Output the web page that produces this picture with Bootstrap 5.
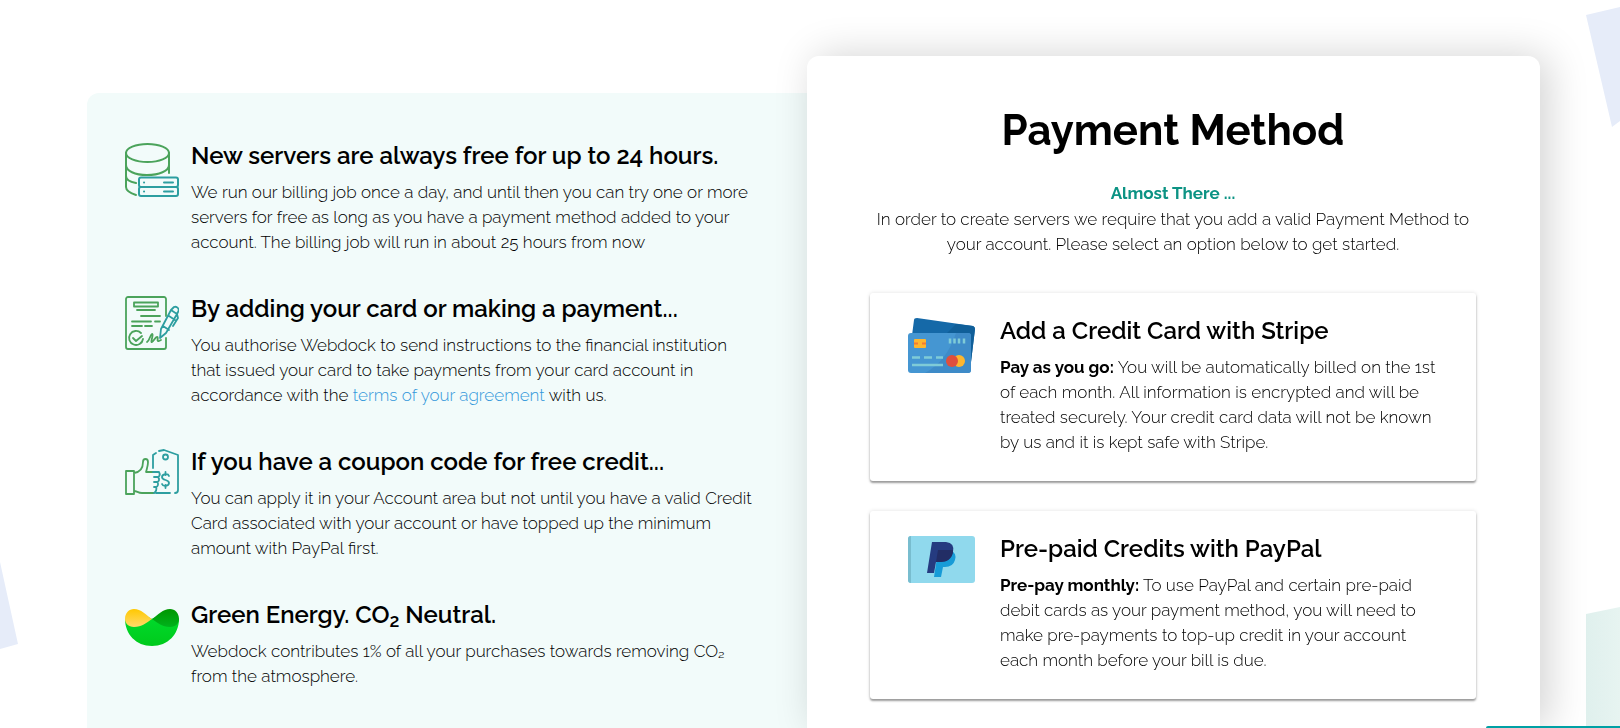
<!DOCTYPE html>
<html lang="en">
<head>
<meta charset="utf-8">
<meta name="viewport" content="width=device-width, initial-scale=1">
<title>Payment Method</title>
<link href="https://cdn.jsdelivr.net/npm/bootstrap@5.3.0/dist/css/bootstrap.min.css" rel="stylesheet">
<style>
body{font-family:Raleway,Lato,"Open Sans",sans-serif;font-size:17px;line-height:25px;font-weight:300;color:#000;background:#fff}
.page-shell{min-height:100vh;overflow:hidden;padding:56px 80px 0 87px}
.info-panel{width:50%;flex:1 1 0;min-width:0;margin-top:37px;padding:48px 24px 24px 38px;background:#f2fbfa;border-radius:12px 0 0 0}
.pay-panel{width:50.450%;flex:none;padding:50px 64px 28px 63px;background:#fff;border-radius:12px 12px 0 0;box-shadow:8px 0 40px rgba(0,0,0,.18);z-index:1}
.info-list{gap:39px}
.info-item{gap:12px}
.info-icon{width:54px;height:54px;margin-top:2px}
h1{font-size:42px;line-height:50px;font-weight:700;color:#000}
h2{font-size:24px;line-height:30px;font-weight:600;color:#000;margin-bottom:9px}
p{margin:0}
h2 sub{font-size:18px;bottom:-4px}
.terms{color:#3498db;text-decoration:none}
.almost{color:#0c9384;font-weight:700;margin:25px 0 1px}
.pay-options{gap:30px;margin-top:36px}
.pay-option{padding:23px 30px 26px 38px;border-radius:3px;box-shadow:0 2px 2px rgba(0,0,0,.36),0 0 4px rgba(0,0,0,.12);color:inherit;text-decoration:none;gap:25px}
.pay-option:hover{color:inherit}
.pay-icon{width:67px;margin-top:2px}
.deco{z-index:-1}
.chat-edge{width:134px;height:2px;background:#00a1a5;border-radius:4px 0 0 0;z-index:2}
strong{font-weight:700;color:#000}
</style>
</head>
<body>
<svg class="deco position-fixed top-0 end-0" width="34" height="130" viewBox="0 0 34 130" aria-hidden="true"><path d="M0 15 34 7V121L26 127Z" fill="#e6ecf9"/></svg>
<svg class="deco position-fixed bottom-0 start-0" width="18" height="166" viewBox="0 0 18 166" aria-hidden="true"><path d="M0 0 18 82 0 87Z" fill="#e6ecf9"/></svg>
<svg class="deco position-fixed bottom-0 end-0" width="34" height="121" viewBox="0 0 34 121" aria-hidden="true"><defs><linearGradient id="mint" x2="1"><stop stop-color="#dff0ed"/><stop offset="1" stop-color="#e7f4f1"/></linearGradient></defs><path d="M0 7 34 0V121H0Z" fill="url(#mint)"/></svg>

<main class="page-shell d-flex">
  <section class="info-panel">
    <div class="info-list d-flex flex-column">
      <article class="info-item d-flex">
        <svg class="info-icon flex-shrink-0" viewBox="0 0 54 54" fill="none" stroke="#4ba35b" stroke-width="2" stroke-linecap="round" aria-hidden="true">
          <ellipse cx="22.500" cy="10" rx="21.500" ry="9"/><path d="M1 10V44c0 4 4 6 10 8M44 10V30M1 22c0 6 9 10 21 10s22-4 22-10M1 33c0 4 4 6 10 7"/>
          <g stroke="#2d9ea0"><rect x="14" y="34.500" width="39" height="9.500" rx="2"/><rect x="14" y="44" width="39" height="9" rx="2"/><path d="M19 39.500h.1M39 39.500h9M19 48.500h.1M39 48.500h9"/></g>
        </svg>
        <div><h2>New servers are always free for up to 24 hours.</h2><p>We run our billing job once a day, and until then you can try one or more<br>servers for free as long as you have a payment method added to your<br>account. The billing job will run in about 25 hours from now</p></div>
      </article>
      <article class="info-item d-flex">
        <svg class="info-icon flex-shrink-0" viewBox="0 0 54 54" fill="none" stroke="#4ba35b" stroke-width="1.800" stroke-linecap="round" stroke-linejoin="round" aria-hidden="true">
          <path d="M41 20V3a2 2 0 0 0-2-2H3a2 2 0 0 0-2 2v48a2 2 0 0 0 2 2h36a2 2 0 0 0 2-2V42M33 6.500H9v4h24ZM12 14h18M16 20h19M7 25.500h19M30 25.500h5M7 30h10M20 30h7"/>
          <path d="M16 37a7 7 0 1 0 2 6M8 42l3 3 6-5M22 46c3-2 3-7 5-8 2 0-2 9 0 8s3-5 5-5-1 5 2 4l2-1"/>
          <g stroke="#2d9ea0"><path d="M35 42l1-9L46 14l6 4-11 19-6 5ZM38 30l6 4M46 14l3-3c3-1 6 2 4 5l-1 2M44 20l6 4M52 18l1 4-5 8"/></g>
        </svg>
        <div><h2>By adding your card or making a payment...</h2><p>You authorise Webdock to send instructions to the financial institution<br>that issued your card to take payments from your card account in<br>accordance with the <a href="#terms" class="terms">terms of your agreement</a> with us.</p></div>
      </article>
      <article class="info-item d-flex">
        <svg class="info-icon flex-shrink-0" viewBox="0 0 54 54" fill="none" stroke="#4ba35b" stroke-width="1.800" stroke-linecap="round" stroke-linejoin="round" aria-hidden="true">
          <path d="M1 22h8v23H1ZM9 24c7-1 9-6 9-11 0-4 5-4 5 0 0 4-1 6-2 10h8M9 42c3 0 4 2 8 2h12"/>
          <g stroke="#2d9ea0"><path d="M28 19V6l3-2M34 2l5-1 14 5v35q0 3-3 3M45 44H31M28 23h6c1 2 1 4-1 5M29 28h4c2 2 1 5-1 5M29 33h3c2 1 1 5-1 5M29 38h2c1 2 0 5-2 6"/><circle cx="40.500" cy="8" r="2.500"/><path d="M44 27c-1-3-7-2-7 1 0 4 7 2 7 6 0 3-6 4-7 1M40.500 23v3M40.500 36v3"/></g>
        </svg>
        <div><h2>If you have a coupon code for free credit...</h2><p>You can apply it in your Account area but not until you have a valid Credit<br>Card associated with your account or have topped up the minimum<br>amount with PayPal first.</p></div>
      </article>
      <article class="info-item d-flex">
        <svg class="info-icon flex-shrink-0" viewBox="0 -6 54 54" aria-hidden="true">
          <defs><linearGradient id="sun" x2="0" y2="1"><stop stop-color="#ffc800"/><stop offset="1" stop-color="#ffda6b"/></linearGradient><linearGradient id="leaf" x2="0" y2="1"><stop stop-color="#009600"/><stop offset="1" stop-color="#00b31c"/></linearGradient><linearGradient id="grass" x2="0" y2="1"><stop stop-color="#00dc2d"/><stop offset="1" stop-color="#00ca1c"/></linearGradient></defs>
          <path d="M0 11C0 26 11 38 27 38S54 26 54 11Q46 0 27 11Q8 0 0 11Z" fill="url(#grass)"/>
          <path d="M27 11C21 15 17 19 9 19 3 19 0 15 0 11 0 5 4 1 9 1c7 0 12 6 18 10Z" fill="url(#sun)"/><path d="M27 11C33 7 38 1 45 1c5 0 9 4 9 10 0 4-3 8-9 8-8 0-12-4-18-8Z" fill="url(#leaf)"/>
        </svg>
        <div><h2>Green Energy. CO<sub>2</sub> Neutral.</h2><p>Webdock contributes 1% of all your purchases towards removing CO₂<br>from the atmosphere.</p></div>
      </article>
    </div>
  </section>

  <section class="pay-panel">
    <header class="text-center"><h1 class="mb-0">Payment Method</h1>
      <p class="almost">Almost There ...</p>
      <p>In order to create servers we require that you add a valid Payment Method to<br>your account. Please select an option below to get started.</p>
    </header>
    <div class="pay-options d-flex flex-column">
      <a href="#stripe" class="pay-option d-flex align-items-start">
        <svg class="pay-icon flex-shrink-0" height="55" viewBox="0 0 67 55" aria-hidden="true">
          <path d="M6 2Q6 0 9 0L65 8q2 1 2 3l-4 33L3 25Z" fill="#1569a8"/><path d="M48 6 65 8q2 1 2 3l-4 33-3-29H39Z" fill="#105f99"/>
          <rect y="15" width="63" height="40" rx="3" fill="#4596d2"/><path d="M48 15h12q3 0 3 3v34q0 3-3 3H17Q39 43 48 15Z" fill="#3e8bc8"/>
          <rect x="6" y="21" width="12" height="9" rx="1" fill="#fdb62f"/><path d="M6 25.500h4M14 25.500h4" stroke="#f27b35" stroke-width="2"/><path d="M42 20.500v5M46.500 20.500v5M51 20.500v5M56 20.500v5M4 39.500h8M16 39.500h8M28 39.500h7M4 47h31" stroke="#7fcbd7" stroke-width="2.500"/>
          <circle cx="51" cy="43" r="6" fill="#fdb62f"/><circle cx="44" cy="43" r="6" fill="#df4f3d"/>
        </svg>
        <div><h2>Add a Credit Card with Stripe</h2><p><strong>Pay as you go:</strong> You will be automatically billed on the 1st<br>of each month. All information is encrypted and will be<br>treated securely. Your credit card data will not be known<br>by us and it is kept safe with Stripe.</p></div>
      </a>
      <a href="#paypal" class="pay-option d-flex align-items-start">
        <svg class="pay-icon flex-shrink-0" height="47" viewBox="0 0 67 47" aria-hidden="true">
          <rect width="67" height="47" rx="3" fill="#90d9ed"/><path d="M3 0v47Q0 47 0 44V3Q0 0 3 0Z" fill="#78bdcf"/>
          <path d="M30 15H43Q49 17 47 24 45 31 37 31H35L33 41H26Z" fill="#179bd7"/><path d="M24 6H38Q47 7 45 16 43 26 32 26H28L26 37H19Z" fill="#253b80"/><path d="M30 14H45Q45 25 33 26H28Z" fill="#222d65"/>
        </svg>
        <div><h2>Pre-paid Credits with PayPal</h2><p><strong>Pre-pay monthly:</strong> To use PayPal and certain pre-paid<br>debit cards as your payment method, you will need to<br>make pre-payments to top-up credit in your account<br>each month before your bill is due.</p></div>
      </a>
    </div>
  </section>
</main>
<div class="chat-edge position-fixed bottom-0 end-0"></div>
<script src="https://cdn.jsdelivr.net/npm/bootstrap@5.3.0/dist/js/bootstrap.bundle.min.js"></script>
</body>
</html>
